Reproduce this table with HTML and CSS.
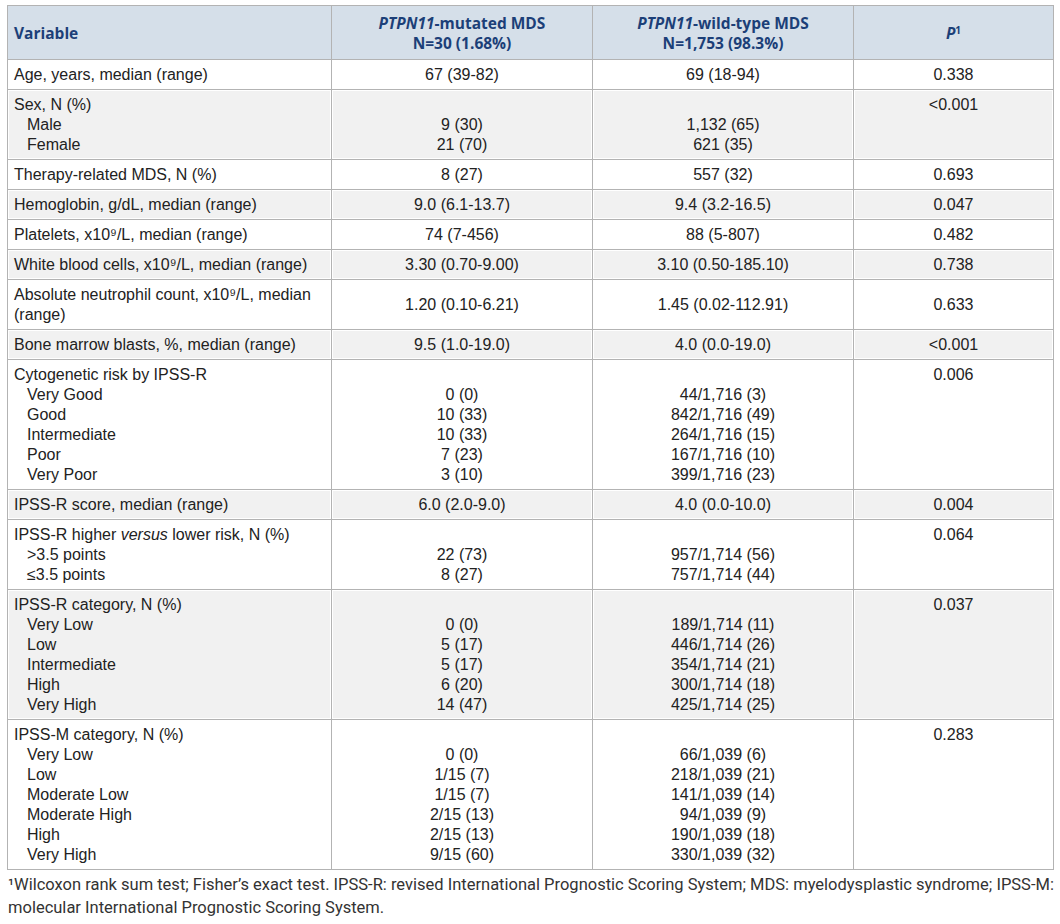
FILE: index.html
```html
<!DOCTYPE html>
<html>
<head>
<meta charset="utf-8">
<link rel="stylesheet" href="styles.css">
</head>
<body>
<div class="page">
<table class="data">
<colgroup><col class="c1"><col class="c2"><col class="c3"><col class="c4"></colgroup>
<thead>
<tr>
<th class="var">Variable</th>
<th><i>PTPN11</i>-mutated MDS<br>N=30 (1.68%)</th>
<th><i>PTPN11</i>-wild-type MDS<br>N=1,753 (98.3%)</th>
<th><i>P</i><span class="sup">1</span></th>
</tr>
</thead>
<tbody>
<tr>
<td class="lab">Age, years, median (range)</td>
<td>67 (39-82)</td><td>69 (18-94)</td><td>0.338</td>
</tr>
<tr class="alt">
<td class="lab"><div>Sex, N (%)</div><div class="sub">Male</div><div class="sub">Female</div></td>
<td><div>&nbsp;</div><div>9 (30)</div><div>21 (70)</div></td>
<td><div>&nbsp;</div><div>1,132 (65)</div><div>621 (35)</div></td>
<td class="top"><div>&lt;0.001</div></td>
</tr>
<tr>
<td class="lab">Therapy-related MDS, N (%)</td>
<td>8 (27)</td><td>557 (32)</td><td>0.693</td>
</tr>
<tr class="alt">
<td class="lab">Hemoglobin, g/dL, median (range)</td>
<td>9.0 (6.1-13.7)</td><td>9.4 (3.2-16.5)</td><td>0.047</td>
</tr>
<tr>
<td class="lab">Platelets, x10⁹/L, median (range)</td>
<td>74 (7-456)</td><td>88 (5-807)</td><td>0.482</td>
</tr>
<tr class="alt">
<td class="lab">White blood cells, x10⁹/L, median (range)</td>
<td>3.30 (0.70-9.00)</td><td>3.10 (0.50-185.10)</td><td>0.738</td>
</tr>
<tr>
<td class="lab"><div>Absolute neutrophil count, x10⁹/L, median</div><div>(range)</div></td>
<td>1.20 (0.10-6.21)</td><td>1.45 (0.02-112.91)</td><td>0.633</td>
</tr>
<tr class="alt">
<td class="lab">Bone marrow blasts, %, median (range)</td>
<td>9.5 (1.0-19.0)</td><td>4.0 (0.0-19.0)</td><td>&lt;0.001</td>
</tr>
<tr>
<td class="lab"><div>Cytogenetic risk by IPSS-R</div><div class="sub">Very Good</div><div class="sub">Good</div><div class="sub">Intermediate</div><div class="sub">Poor</div><div class="sub">Very Poor</div></td>
<td><div>&nbsp;</div><div>0 (0)</div><div>10 (33)</div><div>10 (33)</div><div>7 (23)</div><div>3 (10)</div></td>
<td><div>&nbsp;</div><div>44/1,716 (3)</div><div>842/1,716 (49)</div><div>264/1,716 (15)</div><div>167/1,716 (10)</div><div>399/1,716 (23)</div></td>
<td class="top"><div>0.006</div></td>
</tr>
<tr class="alt">
<td class="lab">IPSS-R score, median (range)</td>
<td>6.0 (2.0-9.0)</td><td>4.0 (0.0-10.0)</td><td>0.004</td>
</tr>
<tr>
<td class="lab"><div>IPSS-R higher <i>versus</i> lower risk, N (%)</div><div class="sub">&gt;3.5 points</div><div class="sub">≤3.5 points</div></td>
<td><div>&nbsp;</div><div>22 (73)</div><div>8 (27)</div></td>
<td><div>&nbsp;</div><div>957/1,714 (56)</div><div>757/1,714 (44)</div></td>
<td class="top"><div>0.064</div></td>
</tr>
<tr class="alt">
<td class="lab"><div>IPSS-R category, N (%)</div><div class="sub">Very Low</div><div class="sub">Low</div><div class="sub">Intermediate</div><div class="sub">High</div><div class="sub">Very High</div></td>
<td><div>&nbsp;</div><div>0 (0)</div><div>5 (17)</div><div>5 (17)</div><div>6 (20)</div><div>14 (47)</div></td>
<td><div>&nbsp;</div><div>189/1,714 (11)</div><div>446/1,714 (26)</div><div>354/1,714 (21)</div><div>300/1,714 (18)</div><div>425/1,714 (25)</div></td>
<td class="top"><div>0.037</div></td>
</tr>
<tr>
<td class="lab"><div>IPSS-M category, N (%)</div><div class="sub">Very Low</div><div class="sub">Low</div><div class="sub">Moderate Low</div><div class="sub">Moderate High</div><div class="sub">High</div><div class="sub">Very High</div></td>
<td><div>&nbsp;</div><div>0 (0)</div><div>1/15 (7)</div><div>1/15 (7)</div><div>2/15 (13)</div><div>2/15 (13)</div><div>9/15 (60)</div></td>
<td><div>&nbsp;</div><div>66/1,039 (6)</div><div>218/1,039 (21)</div><div>141/1,039 (14)</div><div>94/1,039 (9)</div><div>190/1,039 (18)</div><div>330/1,039 (32)</div></td>
<td class="top"><div>0.283</div></td>
</tr>
</tbody>
</table>
<p class="note">¹Wilcoxon rank sum test; Fisher’s exact test. IPSS-R: revised International Prognostic Scoring System; MDS: myelodysplastic syndrome; IPSS-M:<br>molecular International Prognostic Scoring System.</p>
</div>
</body>
</html>
```
FILE: styles.css
```css
html, body {
  margin: 0;
  padding: 0;
  background: #ffffff;
}
.page {
  padding: 5px 8px 0 7px;
}
.data {
  width: 1046px;
  border-collapse: collapse;
  table-layout: fixed;
  font-family: "Liberation Sans", Arial, sans-serif;
  font-size: 16px;
  line-height: 20px;
  color: #222222;
}
.c1 { width: 324px; }
.c2 { width: 261px; }
.c3 { width: 261px; }
.c4 { width: 200px; }
.data th {
  background: #d5dfe9;
  color: #1c3f78;
  font-family: "Open Sans", "Noto Sans", sans-serif;
  font-weight: 700;
  font-size: 15.5px;
  line-height: 20px;
  text-align: center;
  vertical-align: middle;
  padding: 7px 6px 6px;
  border: 1px solid #b3b3b3;
  height: 40px;
}
.data th.var {
  text-align: left;
}
.data th .sup {
  font-size: 10px;
  vertical-align: top;
  line-height: 14px;
}
.data td {
  border: 1px solid #b3b3b3;
  padding: 5px 6px 4px;
  text-align: center;
  vertical-align: middle;
  box-shadow: inset 0 0 0 1px #ffffff;
}
.data td.lab {
  text-align: left;
}
.data td.top {
  vertical-align: top;
}
.data tr.alt td {
  background: #f1f1f1;
}
.sub {
  padding-left: 13px;
}
.note {
  margin: 3px 0 0 1px;
  font-family: "Roboto", "Liberation Sans", sans-serif;
  font-size: 16.5px;
  line-height: 23px;
  color: #333333;
  white-space: nowrap;
}
```
